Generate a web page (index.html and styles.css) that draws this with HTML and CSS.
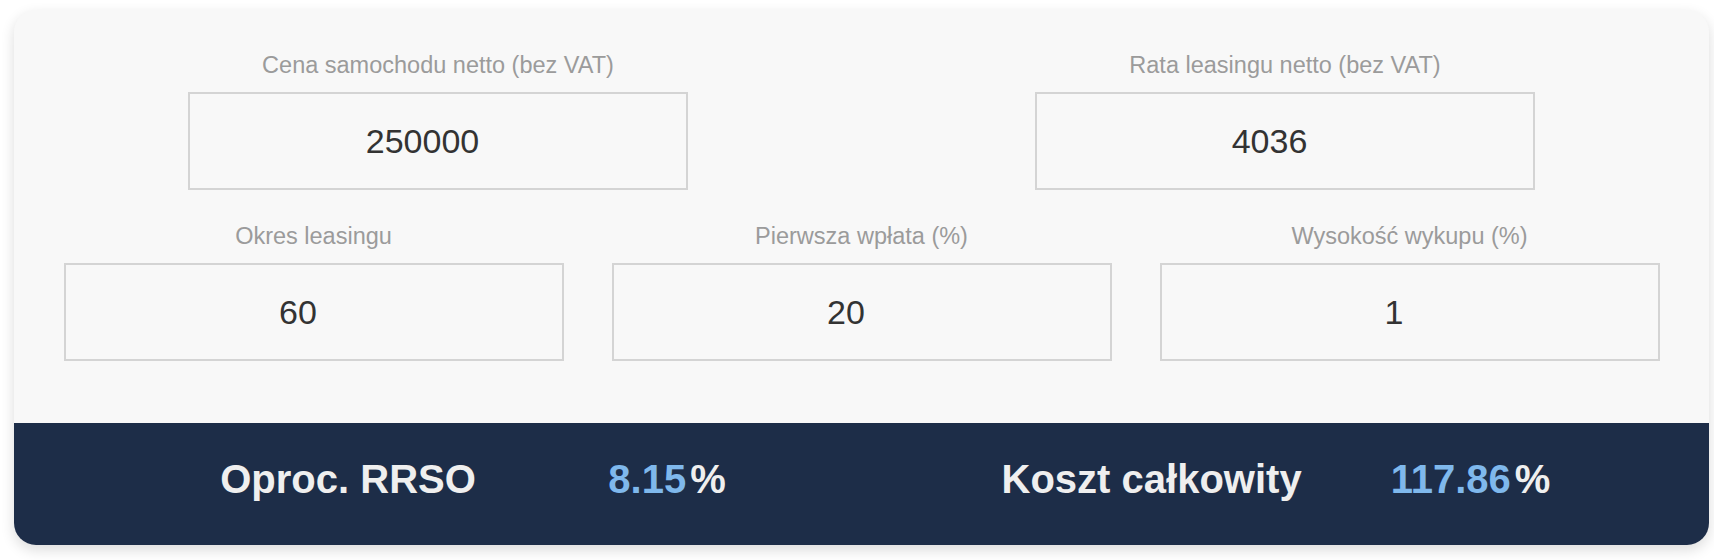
FILE: index.html
```html
<!DOCTYPE html>
<html lang="pl">
<head>
<meta charset="utf-8">
<title>Kalkulator leasingu</title>
<link rel="stylesheet" href="styles.css">
</head>
<body>
<div class="card">
  <div class="inputs">
    <div class="row row-two">
      <div class="field">
        <label class="field-label">Cena samochodu netto (bez VAT)</label>
        <div class="field-input">250000</div>
      </div>
      <div class="field">
        <label class="field-label">Rata leasingu netto (bez VAT)</label>
        <div class="field-input">4036</div>
      </div>
    </div>
    <div class="row row-three">
      <div class="field">
        <label class="field-label">Okres leasingu</label>
        <div class="field-input">60</div>
      </div>
      <div class="field">
        <label class="field-label">Pierwsza wpłata (%)</label>
        <div class="field-input">20</div>
      </div>
      <div class="field">
        <label class="field-label">Wysokość wykupu (%)</label>
        <div class="field-input">1</div>
      </div>
    </div>
  </div>
  <div class="results">
    <div class="result">
      <span class="result-label">Oproc. RRSO</span>
      <span class="result-value"><span class="num">8.15</span><span class="pct">%</span></span>
    </div>
    <div class="result">
      <span class="result-label">Koszt całkowity</span>
      <span class="result-value"><span class="num">117.86</span><span class="pct">%</span></span>
    </div>
  </div>
</div>
</body>
</html>
```
FILE: styles.css
```css
html, body {
  margin: 0;
  padding: 0;
  background: #ffffff;
}

body {
  font-family: "Liberation Sans", Arial, Helvetica, sans-serif;
}

.card {
  margin: 10px 5px 15px 14px;
  height: 535px;
  background: #f8f8f8;
  border-radius: 22px;
  box-shadow: 0 5px 14px rgba(0, 0, 0, 0.14);
  overflow: hidden;
  display: flex;
  flex-direction: column;
}

.inputs {
  padding: 42px 0 62px;
  display: flex;
  flex-direction: column;
  gap: 33px;
  height: 413px;
  box-sizing: border-box;
}

.row {
  display: grid;
  justify-content: center;
}

.row-two {
  grid-template-columns: 500px 500px;
  column-gap: 347px;
}

.row-three {
  grid-template-columns: 500px 500px 500px;
  column-gap: 48px;
}

.field {
  display: flex;
  flex-direction: column;
  align-items: center;
  gap: 14px;
}

.field-label {
  font-size: 23.5px;
  line-height: 26px;
  color: #9b9b9b;
}

.field-input {
  width: 100%;
  height: 98px;
  box-sizing: border-box;
  border: 2px solid #d4d4d4;
  padding-right: 31px;
  display: flex;
  align-items: center;
  justify-content: center;
  font-size: 34px;
  color: #333333;
}

.results {
  flex: 1;
  background: #1d2d48;
  display: flex;
  padding: 33px 0 0 140px;
  gap: 165px;
  box-sizing: border-box;
}

.result {
  width: 638px;
  display: flex;
  justify-content: space-around;
  align-items: flex-start;
  font-size: 40px;
  line-height: 46px;
  font-weight: bold;
  color: #efefef;
}

.num {
  color: #7fb8ec;
}

.pct {
  margin-left: 4px;
}
```
